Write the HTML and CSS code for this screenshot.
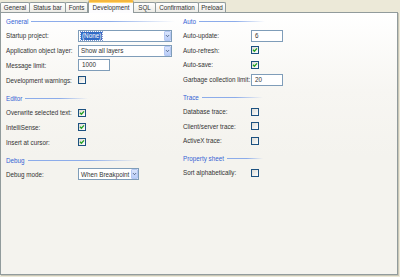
FILE: index.html
```html
<!DOCTYPE html>
<html lang="en">
<head>
    <meta charset="UTF-8">
    <title>Options - Development</title>
    <link rel="stylesheet" href="styles.css">
</head>
<body>
    <div class="dialog">
        <div class="tabs">
            <div class="tab t-general">General</div>
            <div class="tab t-status">Status bar</div>
            <div class="tab t-fonts">Fonts</div>
            <div class="tab active t-dev">Development</div>
            <div class="tab t-sql">SQL</div>
            <div class="tab t-confirm">Confirmation</div>
            <div class="tab t-preload">Preload</div>
        </div>

        <div class="page">
            <div class="col left">
                <div class="group w-general"><span>General</span><i class="rule"></i></div>
                <div class="row">
                    <label>Startup project:</label>
                    <div class="combo combo-wide">
                        <span class="value"><span class="selected">(None)</span></span>
                        <span class="drop"><svg viewBox="0 0 6 6"><path d="M1.2 2 L3 3.8 L4.8 2"/></svg></span>
                    </div>
                </div>
                <div class="row">
                    <label>Application object layer:</label>
                    <div class="combo combo-wide">
                        <span class="value">Show all layers</span>
                        <span class="drop"><svg viewBox="0 0 6 6"><path d="M1.2 2 L3 3.8 L4.8 2"/></svg></span>
                    </div>
                </div>
                <div class="row">
                    <label>Message limit:</label>
                    <div class="field">1000</div>
                </div>
                <div class="row">
                    <label>Development warnings:</label>
                    <span class="check"></span>
                </div>

                <div class="group w-editor"><span>Editor</span><i class="rule"></i></div>
                <div class="row">
                    <label>Overwrite selected text:</label>
                    <span class="check on"><svg viewBox="0 0 6 6"><path d="M1 2.8 L2.4 4.3 L5 1.4"/></svg></span>
                </div>
                <div class="row">
                    <label>IntelliSense:</label>
                    <span class="check on"><svg viewBox="0 0 6 6"><path d="M1 2.8 L2.4 4.3 L5 1.4"/></svg></span>
                </div>
                <div class="row">
                    <label>Insert at cursor:</label>
                    <span class="check on"><svg viewBox="0 0 6 6"><path d="M1 2.8 L2.4 4.3 L5 1.4"/></svg></span>
                </div>

                <div class="group w-debug"><span>Debug</span><i class="rule"></i></div>
                <div class="row">
                    <label>Debug mode:</label>
                    <div class="combo combo-debug">
                        <span class="value">When Breakpoint</span>
                        <span class="drop"><svg viewBox="0 0 6 6"><path d="M1.2 2 L3 3.8 L4.8 2"/></svg></span>
                    </div>
                </div>
            </div>

            <div class="col right">
                <div class="group w-auto"><span>Auto</span><i class="rule"></i></div>
                <div class="row">
                    <label>Auto-update:</label>
                    <div class="field">6</div>
                </div>
                <div class="row">
                    <label>Auto-refresh:</label>
                    <span class="check on"><svg viewBox="0 0 6 6"><path d="M1 2.8 L2.4 4.3 L5 1.4"/></svg></span>
                </div>
                <div class="row">
                    <label>Auto-save:</label>
                    <span class="check on"><svg viewBox="0 0 6 6"><path d="M1 2.8 L2.4 4.3 L5 1.4"/></svg></span>
                </div>
                <div class="row">
                    <label>Garbage collection limit:</label>
                    <div class="field">20</div>
                </div>

                <div class="group w-trace"><span>Trace</span><i class="rule"></i></div>
                <div class="row">
                    <label>Database trace:</label>
                    <span class="check"></span>
                </div>
                <div class="row">
                    <label>Client/server trace:</label>
                    <span class="check"></span>
                </div>
                <div class="row">
                    <label>ActiveX trace:</label>
                    <span class="check"></span>
                </div>

                <div class="group w-trace"><span>Property sheet</span><i class="rule"></i></div>
                <div class="row">
                    <label>Sort alphabetically:</label>
                    <span class="check"></span>
                </div>
            </div>
        </div>
    </div>
</body>
</html>
```

FILE: styles.css
```css
body {
    margin: 0;
    background-color: #ece9d8;
    font-family: 'Liberation Sans', Arial, sans-serif;
    font-size: 6.3px;
    color: #333;
}

.dialog {
    width: 400px;
    height: 277px;
}

/* tab strip */
.tabs {
    display: flex;
    align-items: flex-end;
    height: 12px;
}

.tab {
    box-sizing: border-box;
    height: 10px;
    line-height: 9px;
    text-align: center;
    border: 1px solid #919b9c;
    border-bottom: none;
    border-radius: 2px 2px 0 0;
    background: linear-gradient(#ffffff, #ecebe5);
    white-space: nowrap;
}

.tab + .tab {
    margin-left: -1px;
}

.t-general { width: 30px; }
.t-status { width: 37px; }
.t-fonts { width: 23px; margin-right: 1px; }
.t-dev { width: 46px; }
.t-sql { width: 23px; margin-left: 0; }
.t-confirm { width: 44px; }
.t-preload { width: 28px; }

.tab.active {
    position: relative;
    z-index: 1;
    height: 13px;
    margin-bottom: -1px;
    line-height: 11px;
    background: #fcfcfe;
    border-top: 2px solid #f6b73e;
    border-radius: 2px 2px 0 0;
    box-shadow: inset 0 1px 0 #ffd775;
}

/* page */
.page {
    box-sizing: border-box;
    display: flex;
    width: 398px;
    height: 263px;
    border: 1px solid #919b9c;
    background: linear-gradient(#ffffff 0%, #f7f6f2 30%, #f4f3ee 55%, #f4f3ee 100%);
    box-shadow: 1px 1px 0 #c9c6b6;
    padding: 3px 0 0 5px;
}

.col {
    display: flex;
    flex-direction: column;
}

.left {
    width: 177px;
}

.left .row {
    height: 14.8px;
}

.right .row {
    height: 14.6px;
}

.left label {
    width: 72px;
}

.right label {
    width: 68px;
}

/* group headings */
.group {
    display: flex;
    align-items: center;
    height: 11px;
    margin-top: 5px;
    margin-bottom: 1.5px;
    color: #3563d4;
}

.group:first-child {
    margin-top: 0;
}

.rule {
    flex: 1;
    height: 1px;
    margin-left: 3px;
    background: linear-gradient(to right, #8cacea 55%, rgba(255, 255, 255, 0));
}

.w-general { width: 169px; }
.w-editor { width: 82px; }
.w-debug { width: 134px; }
.w-auto { width: 82px; }
.w-trace { width: 80px; }

/* rows */
.row {
    display: flex;
    align-items: center;
}

label {
    white-space: nowrap;
}

.field {
    box-sizing: border-box;
    width: 32px;
    height: 12px;
    line-height: 10px;
    padding-left: 3px;
    border: 1px solid #7f9db9;
    background-color: #fff;
}

.combo {
    box-sizing: border-box;
    display: flex;
    height: 12px;
    border: 1px solid #7f9db9;
    background-color: #fff;
}

.combo-wide { width: 94px; }
.combo-debug { width: 61px; }

.combo .value {
    flex: 1;
    display: flex;
    align-items: center;
    padding-left: 2px;
    white-space: nowrap;
    overflow: hidden;
}

.combo .selected {
    padding: 0 1px;
    line-height: 8px;
    background-color: #316ac5;
    color: #fff;
    outline: 1px dotted #7d9ad0;
}

.drop {
    box-sizing: border-box;
    width: 7px;
    border: 1px solid #b5c8f2;
    background: linear-gradient(#dae5fc, #b9cdf8);
    border-radius: 1px;
    display: flex;
    align-items: center;
    justify-content: center;
}

.drop svg {
    width: 6px;
    height: 6px;
    fill: none;
    stroke: #4d6185;
    stroke-width: 1.2;
}

.check {
    box-sizing: border-box;
    width: 8px;
    height: 8px;
    border: 1px solid #1c5180;
    background: linear-gradient(135deg, #dcdbd5, #ffffff);
    display: flex;
    align-items: center;
    justify-content: center;
}

.check svg {
    width: 6px;
    height: 6px;
    fill: none;
    stroke: #21a121;
    stroke-width: 1.3;
}
```
